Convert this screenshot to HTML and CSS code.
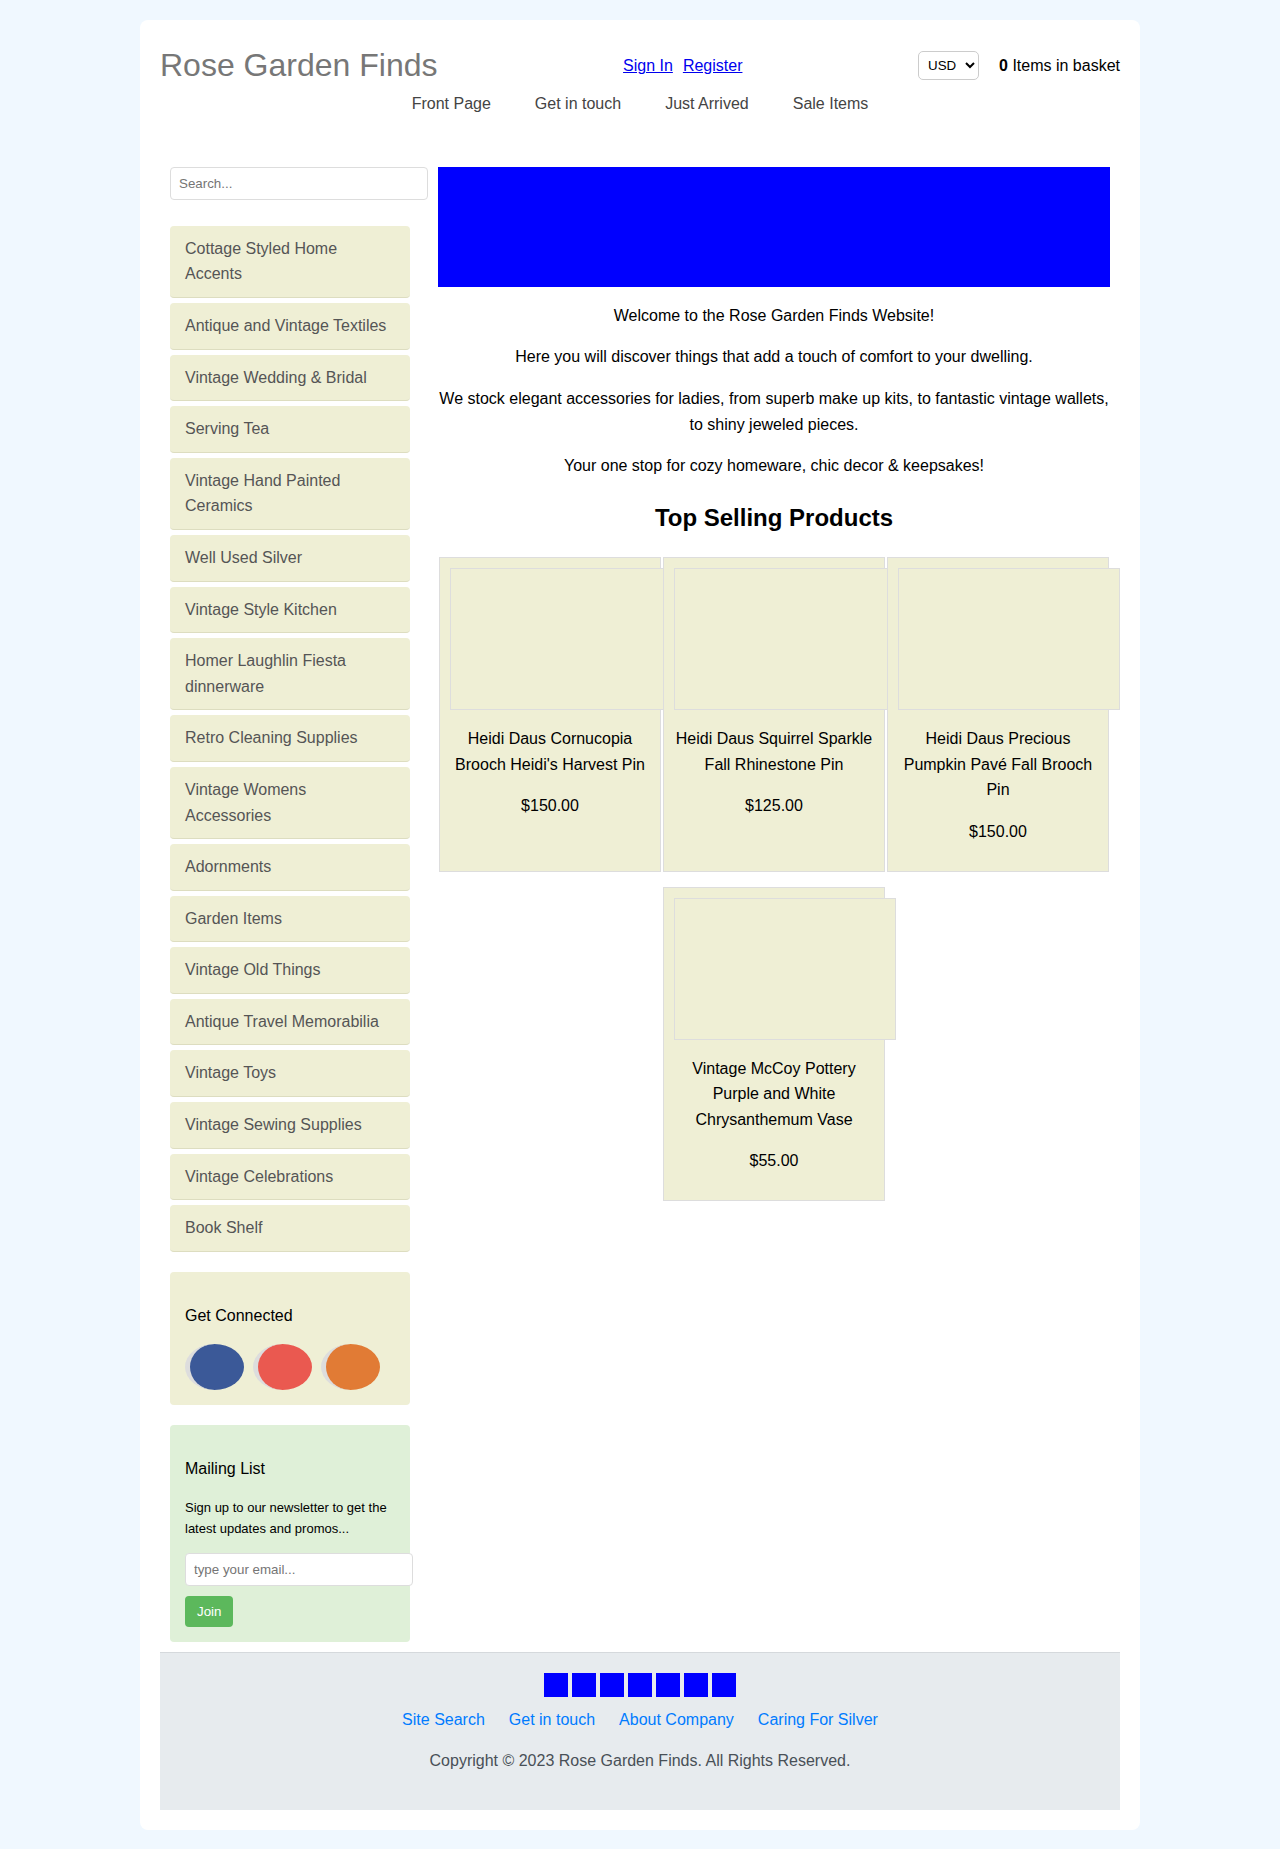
FILE: index.html
```html
<!DOCTYPE html>
<html lang="en">
<head>
<meta charset="utf-8">
<meta name="viewport" content="width=device-width, initial-scale=1">
<title>Rose Garden Finds</title>
<link rel="stylesheet" href="styles.css">
</head>
<body>
<div class="container">
  <header>
    <div class="header-top">
      <h1 class="site-title">Rose Garden Finds</h1>
      <div class="account">
        <a href="#">Sign In</a>
        <a href="#">Register</a>
      </div>
      <div class="header-tools">
        <select class="currency" aria-label="Currency">
          <option>USD</option>
          <option>EUR</option>
          <option>GBP</option>
        </select>
        <span><b>0</b> Items in basket</span>
      </div>
    </div>
    <nav class="main-nav">
      <a href="#">Front Page</a>
      <a href="#">Get in touch</a>
      <a href="#">Just Arrived</a>
      <a href="#">Sale Items</a>
    </nav>
  </header>

  <div class="layout">
    <aside class="sidebar">
      <form class="search">
        <input class="field" type="text" placeholder="Search..." aria-label="Search">
      </form>
      <ul class="categories">
        <li><a href="#">Cottage Styled Home Accents</a></li>
        <li><a href="#">Antique and Vintage Textiles</a></li>
        <li><a href="#">Vintage Wedding &amp; Bridal</a></li>
        <li><a href="#">Serving Tea</a></li>
        <li><a href="#">Vintage Hand Painted Ceramics</a></li>
        <li><a href="#">Well Used Silver</a></li>
        <li><a href="#">Vintage Style Kitchen</a></li>
        <li><a href="#">Homer Laughlin Fiesta dinnerware</a></li>
        <li><a href="#">Retro Cleaning Supplies</a></li>
        <li><a href="#">Vintage Womens Accessories</a></li>
        <li><a href="#">Adornments</a></li>
        <li><a href="#">Garden Items</a></li>
        <li><a href="#">Vintage Old Things</a></li>
        <li><a href="#">Antique Travel Memorabilia</a></li>
        <li><a href="#">Vintage Toys</a></li>
        <li><a href="#">Vintage Sewing Supplies</a></li>
        <li><a href="#">Vintage Celebrations</a></li>
        <li><a href="#">Book Shelf</a></li>
      </ul>
      <section class="panel">
        <p>Get Connected</p>
        <div class="social">
          <a class="social-link facebook" href="#" aria-label="Facebook"></a>
          <a class="social-link google" href="#" aria-label="Google Plus"></a>
          <a class="social-link blog" href="#" aria-label="Blog"></a>
        </div>
      </section>
      <section class="panel mailing">
        <p>Mailing List</p>
        <p class="small">Sign up to our newsletter to get the latest updates and promos...</p>
        <form class="join">
          <input class="field" type="email" placeholder="type your email..." aria-label="Email address">
          <button class="join-button" type="button">Join</button>
        </form>
      </section>
    </aside>

    <main class="content">
      <div class="banner" role="img" aria-label="Rose Garden Finds banner"></div>
      <p>Welcome to the Rose Garden Finds Website!</p>
      <p>Here you will discover things that add a touch of comfort to your dwelling.</p>
      <p>We stock elegant accessories for ladies, from superb make up kits, to fantastic vintage wallets, to shiny jeweled pieces.</p>
      <p>Your one stop for cozy homeware, chic decor &amp; keepsakes!</p>
      <h2>Top Selling Products</h2>
      <div class="products">
        <article class="product">
          <div class="product-image"></div>
          <p>Heidi Daus Cornucopia Brooch Heidi's Harvest Pin</p>
          <p>$150.00</p>
        </article>
        <article class="product">
          <div class="product-image"></div>
          <p>Heidi Daus Squirrel Sparkle Fall Rhinestone Pin</p>
          <p>$125.00</p>
        </article>
        <article class="product">
          <div class="product-image"></div>
          <p>Heidi Daus Precious Pumpkin Pavé Fall Brooch Pin</p>
          <p>$150.00</p>
        </article>
        <article class="product">
          <div class="product-image"></div>
          <p>Vintage McCoy Pottery Purple and White Chrysanthemum Vase</p>
          <p>$55.00</p>
        </article>
      </div>
    </main>
  </div>

  <footer class="footer">
    <div class="badges">
      <span class="badge"></span>
      <span class="badge"></span>
      <span class="badge"></span>
      <span class="badge"></span>
      <span class="badge"></span>
      <span class="badge"></span>
      <span class="badge"></span>
    </div>
    <nav class="footer-nav">
      <a href="#">Site Search</a>
      <a href="#">Get in touch</a>
      <a href="#">About Company</a>
      <a href="#">Caring For Silver</a>
    </nav>
    <p>Copyright © 2023 Rose Garden Finds. All Rights Reserved.</p>
  </footer>
</div>
</body>
</html>
```
FILE: styles.css
```css
body {
  margin: 0;
  padding: 20px;
  background: #f0f8ff;
  color: #000;
  font-family: "Liberation Sans", Arial, sans-serif;
  font-size: 16px;
  line-height: 1.6;
}

p {
  margin: 16px 0;
}

.container {
  box-sizing: border-box;
  max-width: 1000px;
  margin: 0 auto;
  padding: 20px;
  background: #fff;
  border-radius: 8px;
}

/* Header */
.header-top {
  display: flex;
  justify-content: space-between;
  align-items: center;
}

.site-title {
  margin: 0;
  color: #777;
  font-size: 32px;
  font-weight: normal;
}

.account {
  display: flex;
  gap: 10px;
  padding-left: 10px;
}

.account a {
  color: #00e;
}

.header-tools {
  display: flex;
  align-items: center;
  gap: 20px;
}

.currency {
  padding: 5px;
  border: 1px solid #ccc;
  border-radius: 5px;
  background: #fff;
  color: #000;
  font-family: inherit;
}

.main-nav {
  display: flex;
  justify-content: center;
  gap: 44px;
  padding-bottom: 40px;
}

.main-nav a {
  color: #444;
  text-decoration: none;
}

/* Two-column layout */
.layout {
  display: flex;
}

.sidebar {
  flex: none;
  width: 240px;
  padding: 10px 18px 10px 10px;
}

.content {
  flex: 1;
  min-width: 0;
  padding: 10px;
  text-align: center;
}

/* Form fields fill their column, plus their own padding */
.field {
  display: block;
  box-sizing: content-box;
  width: 100%;
  padding: 8px;
  border: 1px solid #ddd;
  border-radius: 4px;
  background: #fff;
  font-family: inherit;
  line-height: 15px;
}

.search {
  margin-bottom: 26px;
}

.categories {
  display: flex;
  flex-direction: column;
  gap: 5px;
  margin: 0 0 20px;
  padding: 0;
  list-style: none;
}

.categories li {
  padding: 10px 15px;
  border-bottom: 1px solid #ddddc0;
  border-radius: 4px;
  background: #efefd5;
}

.categories a {
  color: #555;
  text-decoration: none;
}

.panel {
  padding: 15px;
  border-radius: 4px;
  background: #efefd5;
}

.social {
  display: flex;
  gap: 9px;
}

.social-link {
  width: 54px;
  height: 46px;
  border-left: 5px solid #ddd;
  border-radius: 50%;
}

.facebook { background: #3b5998; }
.google { background: #ea5950; }
.blog { background: #e17b35; }

.mailing {
  margin-top: 20px;
  background: #dff0d8;
}

.mailing .small {
  margin: 13px 0;
  font-size: 13px;
}

.join .field {
  width: 210px;
  max-width: 100%;
}

.join-button {
  display: block;
  margin-top: 10px;
  padding: 8px 12px;
  border: 0;
  border-radius: 4px;
  background: #5cb85c;
  color: #fff;
  font-family: inherit;
  line-height: 15px;
}

/* Main column */
.banner {
  height: 120px;
  background: #00f;
}

h2 {
  margin: 20px 0;
  font-size: 24px;
}

.products {
  display: flex;
  flex-wrap: wrap;
  justify-content: center;
  row-gap: 15px;
}

.product {
  box-sizing: border-box;
  width: calc(100% / 3 - 2px);
  margin: 0 1px;
  padding: 10px;
  border: 1px solid #ddd;
  background: #efefd5;
}

/* The frame runs past the card's right edge */
.product-image {
  box-sizing: content-box;
  width: 100%;
  height: 120px;
  padding: 10px;
  border: 1px solid #ddd;
  background: #efefd5;
}

/* Footer */
.footer {
  padding: 20px;
  border-top: 1px solid #d5d9dc;
  background: #e7ebee;
  color: #495057;
  text-align: center;
}

.badges {
  display: flex;
  justify-content: center;
  gap: 4px;
  margin-bottom: 10px;
}

.badge {
  width: 24px;
  height: 24px;
  background: #00f;
}

.footer-nav {
  display: flex;
  justify-content: center;
  gap: 24px;
}

.footer-nav a {
  color: #007bff;
  text-decoration: none;
}
```
